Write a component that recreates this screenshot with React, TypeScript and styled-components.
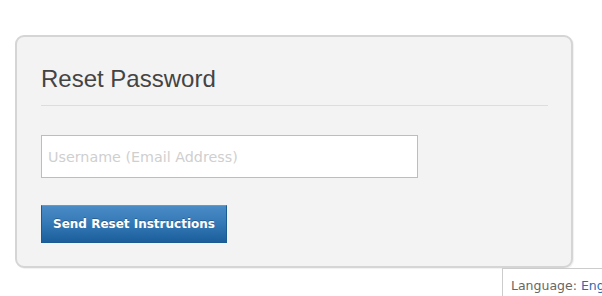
import React from "react";
import styled, { createGlobalStyle } from "styled-components";

const GlobalStyle = createGlobalStyle`
  html, body {
    margin: 0;
    padding: 0;
    background: #ffffff;
    overflow: hidden;
  }
  body {
    font-family: "Liberation Sans", Arial, sans-serif;
  }
`;

const Page = styled.div`
  width: 602px;
  height: 296px;
  overflow: hidden;
  padding: 35px 0 0 15px;
  box-sizing: border-box;
  display: flex;
  flex-direction: column;
`;

const Card = styled.div`
  flex-shrink: 0;
  width: 558px;
  height: 233px;
  box-sizing: border-box;
  background: #f3f3f3;
  border: 2px solid #d5d5d5;
  border-radius: 9px;
  box-shadow: 1px 1px 1px rgba(0, 0, 0, 0.06);
  padding: 28px 23px 0 24px;
  display: flex;
  flex-direction: column;
`;

const Title = styled.h1`
  margin: 0;
  font-family: "Liberation Sans", Arial, sans-serif;
  font-weight: normal;
  font-size: 24px;
  line-height: 28px;
  color: #444444;
`;

const Divider = styled.hr`
  margin: 12px 0 0 0;
  border: 0;
  border-top: 1px solid #dddddd;
  height: 0;
`;

const Input = styled.input`
  margin-top: 29px;
  width: 377px;
  height: 43px;
  box-sizing: border-box;
  border: 1px solid #bdbdbd;
  background: #ffffff;
  padding: 0 6px;
  font-family: "DejaVu Sans", Verdana, sans-serif;
  font-size: 14.3px;
  color: #333;
  outline: none;
  &::placeholder {
    color: #cfcfcf;
  }
`;

const Button = styled.button`
  margin-top: 27px;
  width: 186px;
  height: 38px;
  box-sizing: border-box;
  border: 1px solid #1c5a92;
  border-top-color: #5f9bd0;
  background: linear-gradient(to bottom, #4a8bc6 0%, #3378b6 50%, #1b5e9b 100%);
  color: #ffffff;
  font-family: "DejaVu Sans", Verdana, sans-serif;
  font-weight: bold;
  font-size: 12px;
  text-shadow: 0 -1px 0 rgba(0, 0, 0, 0.25);
  padding: 0;
  cursor: pointer;
`;

const LanguageRow = styled.div`
  flex-shrink: 0;
  display: flex;
  padding-left: 487px;
`;

const LanguageBox = styled.div`
  flex-shrink: 0;
  white-space: nowrap;
  border: 1px solid #cccccc;
  border-right: 0;
  background: #ffffff;
  padding: 9px 20px 10px 8px;
  font-family: "DejaVu Sans", Verdana, sans-serif;
  font-size: 12.5px;
  color: #666666;
`;

const LanguageLink = styled.a`
  color: #2b6db3;
  text-decoration: none;
`;

export default function App() {
  return (
    <>
      <GlobalStyle />
      <Page>
        <Card>
          <Title>Reset Password</Title>
          <Divider />
          <Input type="text" placeholder="Username (Email Address)" />
          <Button type="button">Send Reset Instructions</Button>
        </Card>
        <LanguageRow>
          <LanguageBox>
            Language: <LanguageLink href="#">English</LanguageLink>
          </LanguageBox>
        </LanguageRow>
      </Page>
    </>
  );
}
